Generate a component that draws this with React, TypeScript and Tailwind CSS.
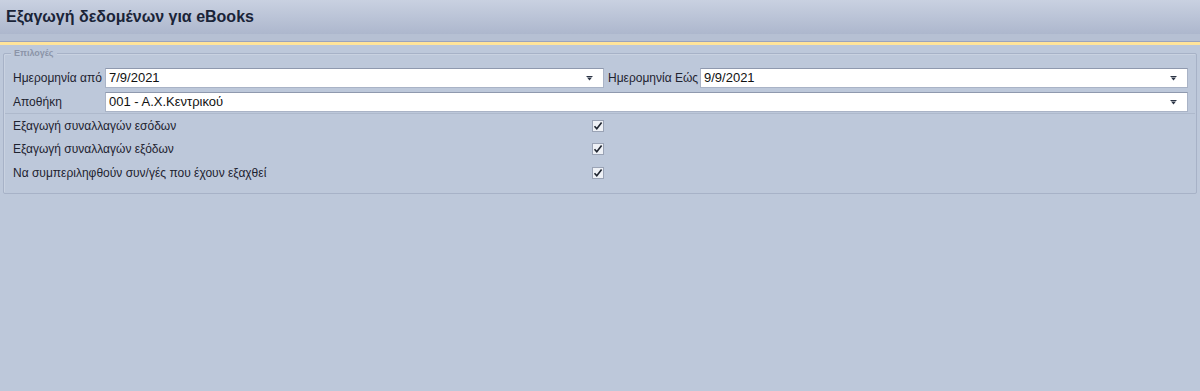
import React from "react";

function Arrow() {
  return (
    <svg width="7" height="5" viewBox="0 0 7 5" className="shrink-0">
      <rect x="0.5" y="0" width="6" height="1" fill="#2b3445" />
      <path d="M1 1.5 L6 1.5 L3.5 4.5 Z" fill="#2b3445" />
    </svg>
  );
}

function Combo({ value, className }: { value: string; className: string }) {
  return (
    <div
      className={`h-[20px] bg-white border border-[#a9b3c6] border-t-[#8f99ae] flex items-center justify-between pl-[3px] pr-[10px] ${className}`}
    >
      <span className="text-[13px] text-[#111]">{value}</span>
      <Arrow />
    </div>
  );
}

function Check() {
  return (
    <div className="w-[12px] h-[12px] bg-[#eef1f6] border border-[#9aa3b5] flex items-center justify-center">
      <svg width="10" height="10" viewBox="0 0 10 10">
        <path d="M1.5 5.2 L3.8 7.8 L8.6 1.6" stroke="#1f2530" strokeWidth="1.6" fill="none" />
      </svg>
    </div>
  );
}

function CheckRow({ label }: { label: string }) {
  return (
    <div className="h-[23.5px] flex items-center pl-[9px]">
      <span className="w-[579px] text-[12px] text-[#1e2330]">{label}</span>
      <Check />
    </div>
  );
}

export default function App() {
  return (
    <div
      className="w-[1200px] h-[391px] bg-[#bdc8da] overflow-hidden flex flex-col"
      style={{ fontFamily: '"Liberation Sans", Arial, sans-serif' }}
    >
      <div className="h-[34px] bg-gradient-to-b from-[#c9d1e1] to-[#adb7cd] flex items-center pl-[6px]">
        <span className="text-[16px] font-bold text-[#1a2438]">
          Εξαγωγή δεδομένων για eBooks
        </span>
      </div>
      <div className="h-[7px] bg-[#b6c0d3]" />
      <div className="h-[1px] bg-[#9aa3bd]" />
      <div className="h-[3px] bg-[#ffe49a]" />
      <div className="h-[8px]" />
      <div className="relative mx-[3px] h-[141px] border border-[#a7b2c7] rounded-[2px] shadow-[inset_1px_1px_0_#c9d2e1]">
        <span className="absolute left-[7px] -top-[7px] px-[3px] bg-[#bdc8da] text-[9px] font-bold text-[#8b94a8] leading-[12px]">
          Επιλογές
        </span>
        <div className="pt-[14px] pl-[9px] pr-[8px] flex flex-col">
          <div className="flex items-center h-[20px]">
            <span className="w-[92px] text-[12px] text-[#1e2330]">Ημερομηνία από</span>
            <Combo value="7/9/2021" className="w-[499px]" />
            <span className="ml-[4px] w-[92px] text-[12px] text-[#1e2330]">Ημερομηνία Εώς</span>
            <Combo value="9/9/2021" className="flex-1" />
          </div>
          <div className="flex items-center h-[20px] mt-[4px]">
            <span className="w-[92px] text-[12px] text-[#1e2330]">Αποθήκη</span>
            <Combo value="001 - Α.Χ.Κεντρικού" className="flex-1" />
          </div>
        </div>
        <div className="mt-[1px] h-[1px] bg-[#aeb9cc] mx-[1px]" />
        <div className="flex flex-col">
          <CheckRow label="Εξαγωγή συναλλαγών εσόδων" />
          <CheckRow label="Εξαγωγή συναλλαγών εξόδων" />
          <CheckRow label="Να συμπεριληφθούν συν/γές που έχουν εξαχθεί" />
        </div>
      </div>
    </div>
  );
}
